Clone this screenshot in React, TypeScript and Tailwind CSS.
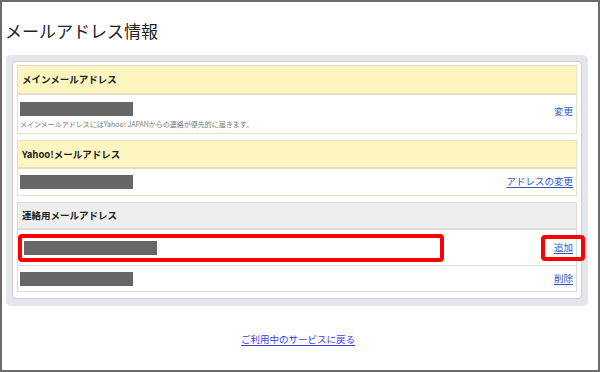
const font = { fontFamily: '"Noto Sans CJK JP", "Liberation Sans", sans-serif' };

function Bar({ w = 'w-[113px]' }: { w?: string }) {
  return <div className={`h-[14px] ${w} bg-[#666666]`} />;
}

function Link({ children }: { children: React.ReactNode }) {
  return <a className="text-[9.5px] leading-none text-[#2e55c4] underline underline-offset-[2px] cursor-pointer">{children}</a>;
}

export default function App() {
  return (
    <div className="w-[600px] h-[372px] border-2 border-[#6b6b6b] bg-white text-[#222]" style={font}>
      <h1 className="pt-[17px] pl-[3px] text-[17px] leading-[24px] text-[#222]">メールアドレス情報</h1>

      <div className="mt-[12px] ml-[4px] w-[582px] rounded-[5px] bg-[#e3e6ec] p-[6px] pb-[7px]">
        <div className="rounded-[4px] border border-[#cfcfcf] bg-white px-[4px] pt-[3px] pb-[6px] flex flex-col gap-[6px]">
          {/* main address */}
          <section className="border border-[#e4dfc6]">
            <div className="h-[29px] flex items-center bg-[#fff5c1] border-b-2 border-[#e4dfc6] pl-[4px] text-[9.5px] font-bold">
              メインメールアドレス
            </div>
            <div className="h-[38px] flex justify-between pl-[2px] pr-[3px] pt-[7px]">
              <div>
                <Bar />
                <p className="mt-[3px] text-[7px] leading-[10px] text-[#777]">
                  メインメールアドレスにはYahoo! JAPANからの連絡が優先的に届きます。
                </p>
              </div>
              <a className="mt-[5px] text-[9.5px] leading-none text-[#2e55c4] cursor-pointer">変更</a>
            </div>
          </section>

          {/* yahoo address */}
          <section className="border border-[#e4dfc6]">
            <div className="h-[28px] flex items-center bg-[#fff5c1] border-b-2 border-[#e4dfc6] pl-[4px] text-[9.5px] font-bold">
              Yahoo!メールアドレス
            </div>
            <div className="h-[26px] flex items-center justify-between pl-[2px] pr-[3px]">
              <Bar />
              <Link>アドレスの変更</Link>
            </div>
          </section>

          {/* contact addresses */}
          <section className="border border-[#dcdcdc]">
            <div className="h-[27px] flex items-center bg-[#eeeeee] border-b-2 border-[#dcdcdc] pl-[4px] text-[9.5px] font-bold">
              連絡用メールアドレス
            </div>
            <div className="relative h-[36px] flex items-center justify-between pl-[6px] pr-[3px] border-b border-[#dcdcdc]">
              <Bar w="w-[133px]" />
              <Link>追加</Link>
              <div className="absolute left-0 top-[4px] h-[28px] w-[426px] rounded-[4px] border-[4px] border-[#ff0000]" />
              <div className="absolute right-[-9px] top-[5px] h-[26px] w-[44px] rounded-[4px] border-[4px] border-[#ff0000]" />
            </div>
            <div className="h-[25px] flex items-center justify-between pl-[2px] pr-[3px]">
              <Bar />
              <Link>削除</Link>
            </div>
          </section>
        </div>
      </div>

      <div className="mt-[29px] flex justify-center pr-[4px]">
        <a className="text-[9.5px] leading-none text-[#3b3bef] underline underline-offset-[2px] cursor-pointer">
          ご利用中のサービスに戻る
        </a>
      </div>
    </div>
  );
}
